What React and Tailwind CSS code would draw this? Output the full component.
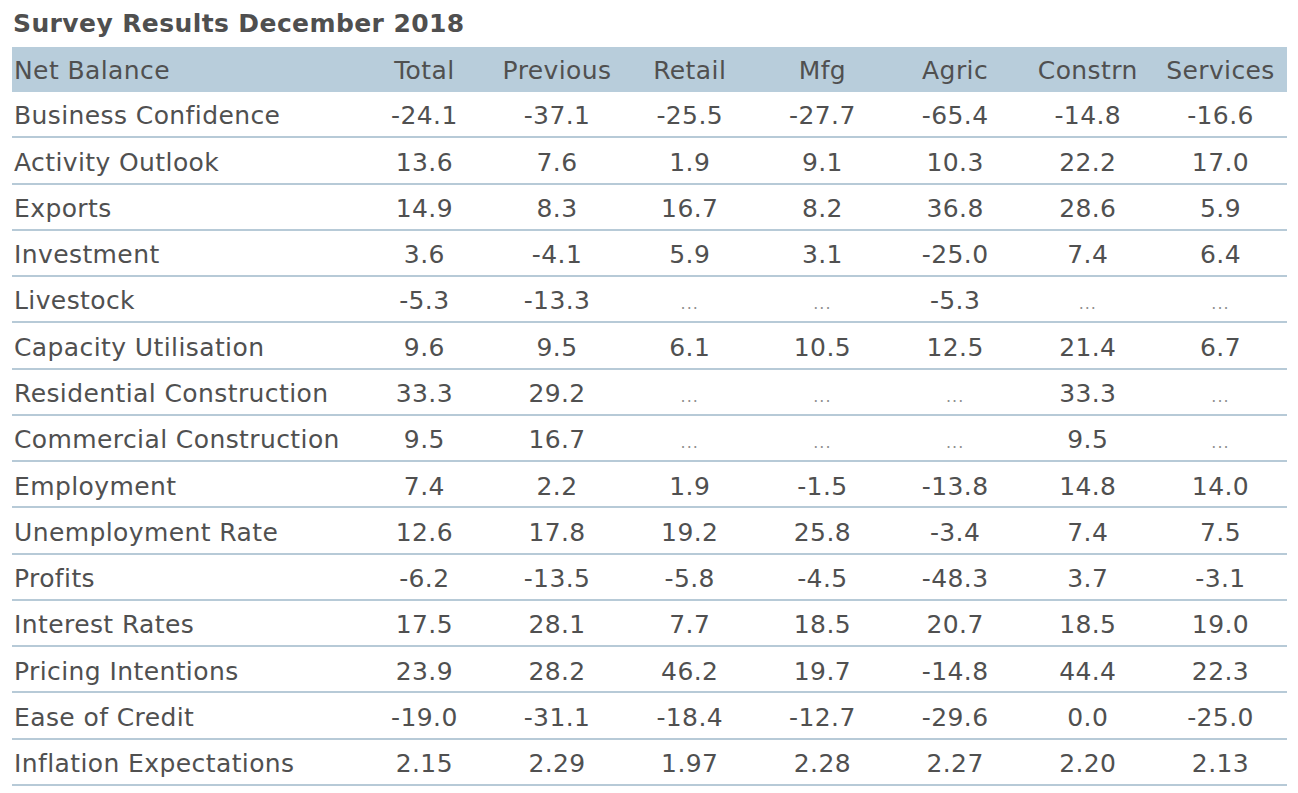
const columns = ['Total', 'Previous', 'Retail', 'Mfg', 'Agric', 'Constrn', 'Services']

const rows = [
  ['Business Confidence', '-24.1', '-37.1', '-25.5', '-27.7', '-65.4', '-14.8', '-16.6'],
  ['Activity Outlook', '13.6', '7.6', '1.9', '9.1', '10.3', '22.2', '17.0'],
  ['Exports', '14.9', '8.3', '16.7', '8.2', '36.8', '28.6', '5.9'],
  ['Investment', '3.6', '-4.1', '5.9', '3.1', '-25.0', '7.4', '6.4'],
  ['Livestock', '-5.3', '-13.3', null, null, '-5.3', null, null],
  ['Capacity Utilisation', '9.6', '9.5', '6.1', '10.5', '12.5', '21.4', '6.7'],
  ['Residential Construction', '33.3', '29.2', null, null, null, '33.3', null],
  ['Commercial Construction', '9.5', '16.7', null, null, null, '9.5', null],
  ['Employment', '7.4', '2.2', '1.9', '-1.5', '-13.8', '14.8', '14.0'],
  ['Unemployment Rate', '12.6', '17.8', '19.2', '25.8', '-3.4', '7.4', '7.5'],
  ['Profits', '-6.2', '-13.5', '-5.8', '-4.5', '-48.3', '3.7', '-3.1'],
  ['Interest Rates', '17.5', '28.1', '7.7', '18.5', '20.7', '18.5', '19.0'],
  ['Pricing Intentions', '23.9', '28.2', '46.2', '19.7', '-14.8', '44.4', '22.3'],
  ['Ease of Credit', '-19.0', '-31.1', '-18.4', '-12.7', '-29.6', '0.0', '-25.0'],
  ['Inflation Expectations', '2.15', '2.29', '1.97', '2.28', '2.27', '2.20', '2.13'],
]

const grid = 'grid grid-cols-[346px_repeat(7,132.7px)] items-center'

export default function App() {
  return (
    <div className="bg-white w-[1298px] h-[793px] pl-[12px] text-[#505050] font-['DejaVu_Sans','Verdana',sans-serif] tracking-[0.4px]">
      <h1 className="h-[47px] pt-[8px] pl-[1px] text-[25px] leading-[32px] font-bold text-[#4f4f4f]">
        Survey Results December 2018
      </h1>
      <div className="w-[1275px]">
        <div className={`${grid} h-[45px] pt-[3px] bg-[#b8cddb] text-[25px]`}>
          <div className="pl-[2px]">Net Balance</div>
          {columns.map(c => (
            <div key={c} className="text-center">{c}</div>
          ))}
        </div>
        {rows.map(r => (
          <div key={r[0]} className={`${grid} h-[46.27px] border-b-2 border-[#b7cad7] text-[25px] pt-[4px]`}>
            <div className="pl-[2px] whitespace-nowrap">{r[0]}</div>
            {r.slice(1).map((v, i) => (
              <div key={i} className="text-center">
                {v ?? <span className="text-[16px] text-[#8f8f8f] tracking-[1px]">...</span>}
              </div>
            ))}
          </div>
        ))}
      </div>
    </div>
  )
}
